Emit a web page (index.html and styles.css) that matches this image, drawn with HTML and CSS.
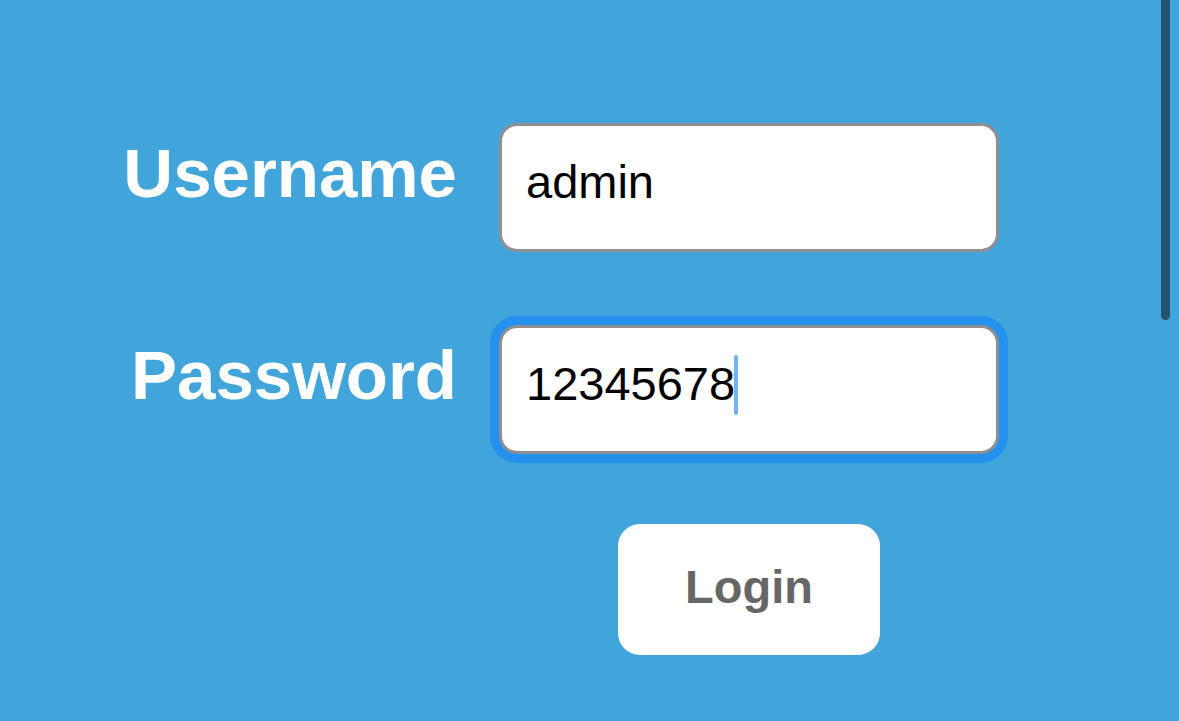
FILE: index.html
```html
<!DOCTYPE html>
<html>
<head>
<meta charset="utf-8">
<title>Login</title>
<link rel="stylesheet" href="styles.css">
</head>
<body>
<div class="page">
  <form class="form">
    <label class="label" for="user">Username</label>
    <div class="field">
      <input class="input" id="user" type="text" value="admin" readonly>
    </div>
    <label class="label" for="pass">Password</label>
    <div class="field">
      <input class="input focused" id="pass" type="text" value="12345678" readonly>
      <span class="caret"></span>
    </div>
    <button class="login" type="button">Login</button>
  </form>
  <div class="scrollbar"></div>
</div>
</body>
</html>
```

FILE: styles.css
```css
html, body {
  margin: 0;
  padding: 0;
  height: 100%;
  overflow: hidden;
}
body {
  background: #41a5dc;
  font-family: "Liberation Sans", Arial, sans-serif;
}
.page {
  position: relative;
  height: 100%;
}
.form {
  display: grid;
  grid-template-columns: 400px 500px;
  column-gap: 42px;
  row-gap: 73px;
  align-items: start;
  padding: 123px 0 0 57px;
}
.label {
  justify-self: end;
  margin-top: 16px;
  color: #ffffff;
  font-weight: bold;
  font-size: 69px;
  line-height: 1;
}
.field {
  position: relative;
  display: flex;
}
.input {
  box-sizing: border-box;
  width: 500px;
  height: 129px;
  margin: 0;
  padding: 0 24px 12px;
  border: 3px solid #8e8e93;
  border-radius: 18px;
  background: #ffffff;
  color: #000000;
  font-family: "Liberation Sans", Arial, sans-serif;
  font-size: 47px;
  outline: none;
}
.input.focused {
  outline: 9px solid #2491ee;
  outline-offset: 0;
}
.caret {
  position: absolute;
  left: 235px;
  top: 30px;
  width: 4px;
  height: 60px;
  border-radius: 2px;
  background: #70b4f7;
}
.login {
  grid-column: 2;
  justify-self: center;
  margin-top: -3px;
  width: 262px;
  height: 131px;
  padding: 0 0 6px;
  border: none;
  border-radius: 22px;
  background: #ffffff;
  color: #666666;
  font-family: "Liberation Sans", Arial, sans-serif;
  font-weight: bold;
  font-size: 47px;
}
.scrollbar {
  position: absolute;
  left: 1161px;
  top: -10px;
  width: 9px;
  height: 330px;
  border-radius: 5px;
  background: #22536f;
}
```
